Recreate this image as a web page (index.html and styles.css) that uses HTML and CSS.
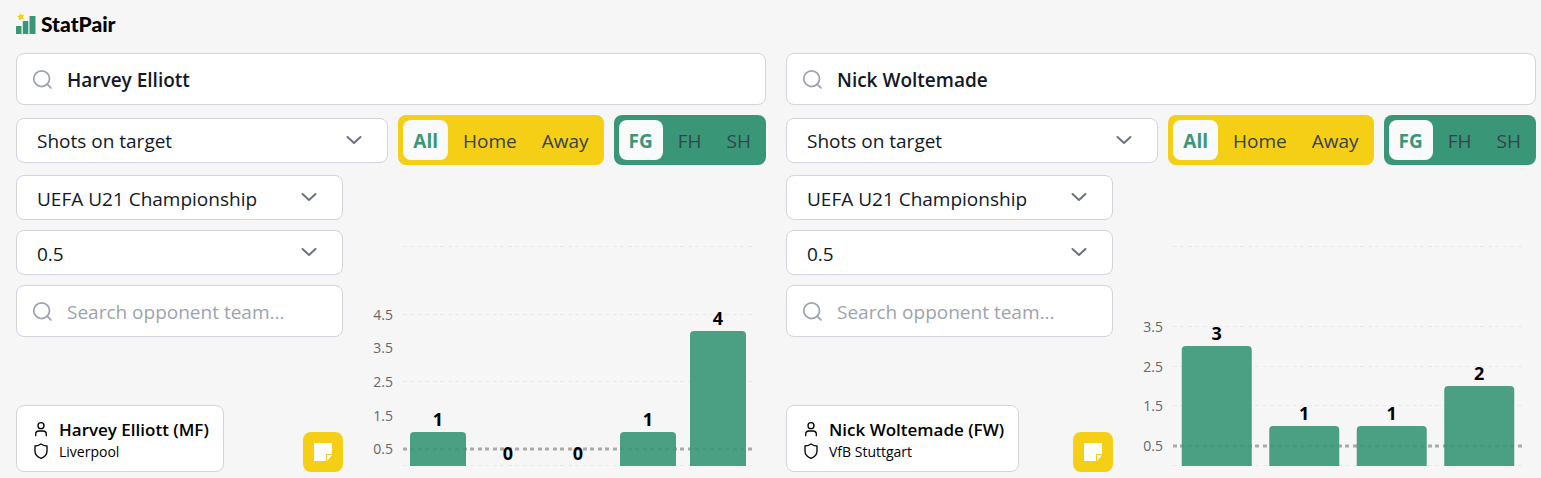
FILE: index.html
```html
<!DOCTYPE html>
<html lang="en">
	<head>
		<meta charset="utf-8" />
		<meta name="viewport" content="width=device-width, initial-scale=1" />
		<title>StatPair</title>
		<link rel="stylesheet" href="styles.css">
	</head>
	<body>
	<!-- shared icons -->
	<svg class="sprite" aria-hidden="true">
		<symbol id="i-search" viewBox="0 0 24 24"><circle cx="11" cy="11" r="9"/><path d="M21.5 21.5l-4.2-4.2"/></symbol>
		<symbol id="i-user" viewBox="0 0 24 24"><circle cx="12" cy="7" r="4.5"/><path d="M4 22v-2a5 5 0 0 1 5-5h6a5 5 0 0 1 5 5v2"/></symbol>
		<symbol id="i-shield" viewBox="0 0 24 24"><path d="M12 1.5q4 3 9 3v8c0 5-4 8.500-9 10.500c-5-2-9-5.500-9-10.500v-8q5 0 9-3z"/></symbol>
		<symbol id="i-note" viewBox="0 0 20 20"><path d="M1 1h18v11h-6v7h-12z"/><path d="M14 13h5l-5 6z"/></symbol>
	</svg>

	<header class="header">
		<a class="logo" href="#">
			<svg class="logo-mark" viewBox="0 0 20 22" aria-hidden="true">
				<path class="star" d="M4.200 0l1.400 2 2.700-.2-1.500 2.200 1 2.500-2.600-.6-2 1.500-.2-2.600-2.200-1.500 2.600-.7z"/>
				<rect x="0" y="13" width="5.500" height="8" rx=".5"/>
				<rect x="6.800" y="8" width="5.500" height="13" rx=".5"/>
				<rect x="13.500" y="3" width="6" height="18" rx=".5"/>
			</svg>
			<span>StatPair</span>
		</a>
	</header>

	<main class="pair">
		<section class="player">
			<label class="search">
				<svg class="icon"><use href="#i-search"/></svg>
				<input class="name" type="text" aria-label="Player" value="Harvey Elliott">
			</label>
			<div class="filters">
				<select class="select" aria-label="Statistic"><option>Shots on target</option></select>
				<div class="tabs yellow">
					<button class="tab active" type="button">All</button>
					<button class="tab" type="button">Home</button>
					<button class="tab" type="button">Away</button>
				</div>
				<div class="tabs green">
					<button class="tab active" type="button">FG</button>
					<button class="tab" type="button">FH</button>
					<button class="tab" type="button">SH</button>
				</div>
			</div>
			<div class="content">
				<div class="side">
					<select class="select" aria-label="Competition"><option>UEFA U21 Championship</option></select>
					<select class="select" aria-label="Line"><option>0.5</option></select>
					<label class="search">
						<svg class="icon"><use href="#i-search"/></svg>
						<input type="text" aria-label="Opponent" placeholder="Search opponent team...">
					</label>
					<div class="bottom">
						<div class="card">
							<div class="card-row card-name"><svg class="icon"><use href="#i-user"/></svg>Harvey Elliott (MF)</div>
							<div class="card-row"><svg class="icon"><use href="#i-shield"/></svg>Liverpool</div>
						</div>
						<button class="note" type="button" aria-label="Notes"><svg><use href="#i-note"/></svg></button>
					</div>
				</div>
				<div class="chart">
					<svg class="axis" aria-hidden="true">
						<text x="100%" y="145">4.5</text>
						<text x="100%" y="178">3.5</text>
						<text x="100%" y="212">2.5</text>
						<text x="100%" y="246">1.5</text>
						<text x="100%" y="279">0.5</text>
					</svg>
					<svg class="plot" role="img" aria-label="Shots on target per match">
						<g class="grid">
							<line x1="0" x2="100%" y1="71.500" y2="71.500"/>
							<line x1="0" x2="100%" y1="139.500" y2="139.500"/>
							<line x1="0" x2="100%" y1="206.500" y2="206.500"/>
							<line x1="0" x2="100%" y1="290.500" y2="290.500"/>
						</g>
						<line class="limit" x1="0" x2="100%" y1="274" y2="274"/>
						<svg height="291" width="100%">
							<g class="bars">
								<rect x="2%" y="257" width="16%" height="40" rx="4"/>
								<rect x="62%" y="257" width="16%" height="40" rx="4"/>
								<rect x="82%" y="156" width="16%" height="140" rx="4"/>
							</g>
						</svg>
						<g class="values">
							<text x="10%" y="251">1</text>
							<text x="30%" y="285">0</text>
							<text x="50%" y="285">0</text>
							<text x="70%" y="251">1</text>
							<text x="90%" y="150">4</text>
						</g>
					</svg>
				</div>
			</div>
		</section>

		<section class="player">
			<label class="search">
				<svg class="icon"><use href="#i-search"/></svg>
				<input class="name" type="text" aria-label="Player" value="Nick Woltemade">
			</label>
			<div class="filters">
				<select class="select" aria-label="Statistic"><option>Shots on target</option></select>
				<div class="tabs yellow">
					<button class="tab active" type="button">All</button>
					<button class="tab" type="button">Home</button>
					<button class="tab" type="button">Away</button>
				</div>
				<div class="tabs green">
					<button class="tab active" type="button">FG</button>
					<button class="tab" type="button">FH</button>
					<button class="tab" type="button">SH</button>
				</div>
			</div>
			<div class="content">
				<div class="side">
					<select class="select" aria-label="Competition"><option>UEFA U21 Championship</option></select>
					<select class="select" aria-label="Line"><option>0.5</option></select>
					<label class="search">
						<svg class="icon"><use href="#i-search"/></svg>
						<input type="text" aria-label="Opponent" placeholder="Search opponent team...">
					</label>
					<div class="bottom">
						<div class="card">
							<div class="card-row card-name"><svg class="icon"><use href="#i-user"/></svg>Nick Woltemade (FW)</div>
							<div class="card-row"><svg class="icon"><use href="#i-shield"/></svg>VfB Stuttgart</div>
						</div>
						<button class="note" type="button" aria-label="Notes"><svg><use href="#i-note"/></svg></button>
					</div>
				</div>
				<div class="chart">
					<svg class="axis" aria-hidden="true">
						<text x="100%" y="157">3.5</text>
						<text x="100%" y="197">2.5</text>
						<text x="100%" y="236">1.5</text>
						<text x="100%" y="276">0.5</text>
					</svg>
					<svg class="plot" role="img" aria-label="Shots on target per match">
						<g class="grid">
							<line x1="0" x2="100%" y1="71.500" y2="71.500"/>
							<line x1="0" x2="100%" y1="151.500" y2="151.500"/>
							<line x1="0" x2="100%" y1="191.500" y2="191.500"/>
							<line x1="0" x2="100%" y1="230.500" y2="230.500"/>
							<line x1="0" x2="100%" y1="290.500" y2="290.500"/>
						</g>
						<line class="limit" x1="0" x2="100%" y1="271" y2="271"/>
						<svg height="291" width="100%">
							<g class="bars">
								<rect x="2.5%" y="171" width="20%" height="125" rx="4"/>
								<rect x="27.5%" y="251" width="20%" height="46" rx="4"/>
								<rect x="52.5%" y="251" width="20%" height="46" rx="4"/>
								<rect x="77.5%" y="211" width="20%" height="85" rx="4"/>
							</g>
						</svg>
						<g class="values">
							<text x="12.5%" y="165">3</text>
							<text x="37.5%" y="245">1</text>
							<text x="62.5%" y="245">1</text>
							<text x="87.5%" y="205">2</text>
						</g>
					</svg>
				</div>
			</div>
		</section>
	</main>
	</body>
</html>
```
FILE: styles.css
```css
*{margin: 0;padding: 0;box-sizing: border-box;}
body{background: #f6f6f6;font-family: "Segoe UI","Open Sans","Noto Sans",sans-serif;font-size: 19px;color: #111827;}
input,select,button{font: inherit;color: inherit;}
.sprite{position: absolute;width: 0;height: 0;}

/* header */
.header{padding: 12px 16px 0;height: 53px;}
.logo{display: inline-flex;align-items: center;gap: 5px;color: #000;text-decoration: none;font-family: Lato,sans-serif;font-weight: 900;font-size: 21px;line-height: 24px;}
.logo-mark{width: 20px;height: 22px;fill: #399777;}
.logo-mark .star{fill: #f5cf15;}

/* two players side by side */
.pair{display: grid;grid-template-columns: 1fr 1fr;gap: 20px;padding: 0 5px 6px 16px;}
.player{display: flex;flex-direction: column;gap: 10px;min-width: 0;}
.icon{fill: none;stroke: currentColor;stroke-width: 2;stroke-linecap: round;stroke-linejoin: round;flex: none;}

.search,.select,.card{background-color: #fff;border: 1px solid #d1d5db;border-radius: 8px;}
.search{display: flex;align-items: center;gap: 14px;height: 52px;padding: 0 15px;}
.search .icon{width: 21px;height: 21px;color: #9ca3af;}
.search input{flex: 1;min-width: 0;padding-top: 2px;border: 0;outline: 0;background: none;}
.search input::placeholder{color: #9ca3af;opacity: 1;}
.search .name{font-weight: 600;}
.select{appearance: none;width: 100%;height: 45px;padding: 2px 50px 0 20px;background-image: url("data:image/svg+xml,%3Csvg xmlns='http://www.w3.org/2000/svg' width='16' height='10' fill='none' stroke='%236b7280' stroke-width='2' stroke-linecap='round' stroke-linejoin='round'%3E%3Cpath d='M1.500 2L8 8l6.500-6'/%3E%3C/svg%3E");background-repeat: no-repeat;background-position: right 25px top 16px;}

.filters{display: flex;align-items: center;gap: 10px;}
.filters .select{flex: 1;min-width: 0;}
.tabs{display: flex;gap: 5px;padding: 5px;border-radius: 8px;}
.tab{height: 40px;padding: 2px 10px 0;border: 0;border-radius: 8px;background: none;color: #374151;}
.tab.active{background: #f9fafb;color: #399777;font-weight: 700;}
.yellow{background: #f5cf15;}
.green{background: #399777;}

/* options and chart */
.content{display: grid;grid-template-columns: 327px 1fr;gap: 10px;}
.side{display: flex;flex-direction: column;gap: 10px;}
.bottom{display: flex;justify-content: space-between;align-items: flex-end;padding-top: 58px;}
.card{height: 67px;padding: 12px 14px 10px 16px;font-size: 14px;color: #000;}
.card-row{display: flex;align-items: center;gap: 10px;height: 22px;}
.card-row .icon{width: 16px;height: 16px;}
.card-name{font-size: 17px;font-weight: 600;}
.note{display: grid;place-items: center;width: 40px;height: 40px;border: 0;border-radius: 8px;background: #f5cf15;}
.note svg{width: 20px;height: 20px;fill: #fff;}

.chart{display: flex;gap: 10px;padding-right: 13px;min-width: 0;}
.axis{width: 40px;height: 297px;font-size: 14px;fill: #666;text-anchor: end;}
.plot{flex: 1;min-width: 0;height: 297px;}
.grid line{stroke: #e9e9e9;stroke-dasharray: 4 3 4 4;}
.limit{stroke: #aaa;stroke-width: 3;stroke-dasharray: 4 3 4 4;}
.bars{fill: #399777;fill-opacity: .9;}
.values{fill: #000;font-size: 18px;font-weight: 700;text-anchor: middle;}
```
